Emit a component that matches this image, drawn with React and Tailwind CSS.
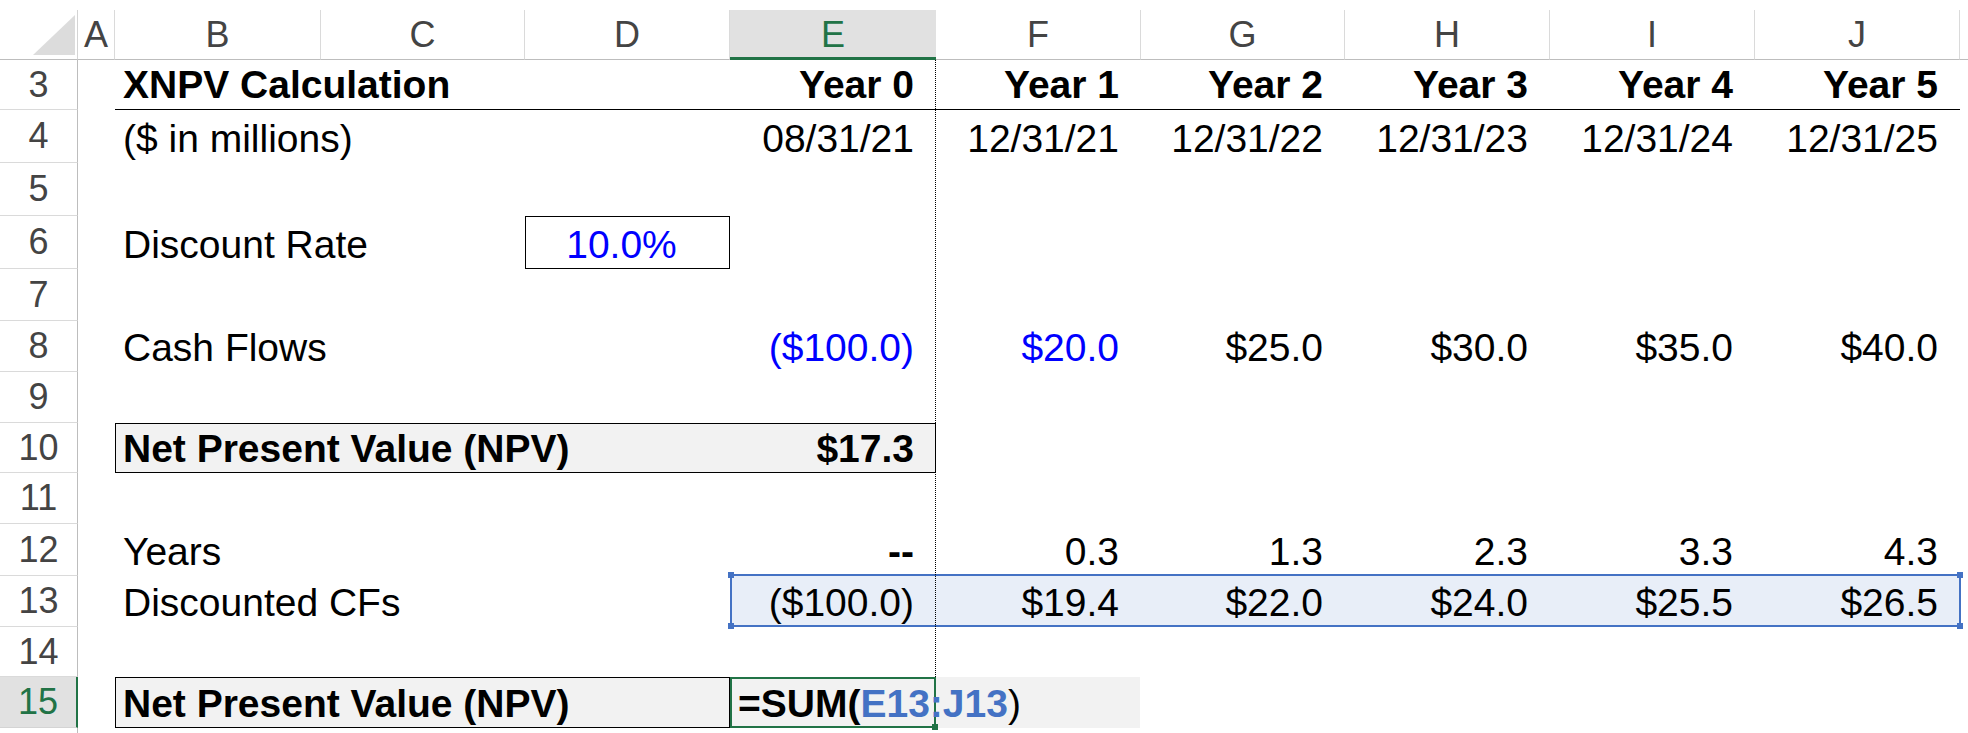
import React from "react";

const FONT = { fontFamily: '"Liberation Sans", Arial, Helvetica, sans-serif' };

const COLS = [
  { l: "A", w: "w-[37px]" },
  { l: "B", w: "w-[206px]" },
  { l: "C", w: "w-[204px]" },
  { l: "D", w: "w-[205px]" },
  { l: "E", w: "w-[206px]" },
  { l: "F", w: "w-[205px]" },
  { l: "G", w: "w-[204px]" },
  { l: "H", w: "w-[205px]" },
  { l: "I", w: "w-[205px]" },
  { l: "J", w: "w-[205px]" },
];

function RowHead({ n, active }) {
  return (
    <div
      className={
        active
          ? "w-[78px] shrink-0 flex items-center justify-center bg-[#e1e1e1] text-[#217346] border-r-2 border-r-[#217346] border-b border-b-[#d4d4d4] text-[36px]"
          : "w-[78px] shrink-0 flex items-center justify-center text-[#444444] border-r border-r-[#bdbdbd] border-b border-b-[#dadada] text-[36px]"
      }
    >
      {n}
    </div>
  );
}

function Cell({ w, right, center, className = "", children }) {
  const align = right ? "justify-end pr-[22px]" : center ? "justify-center" : "justify-start pl-[8px]";
  return (
    <div className={`${w} shrink-0 flex items-end pb-[5px] whitespace-nowrap text-[39px] leading-[39px] ${align} ${className}`}>
      {children}
    </div>
  );
}

function Row({ h, n, active, children }) {
  return (
    <div className={`flex ${h}`}>
      <RowHead n={n} active={active} />
      {children}
    </div>
  );
}

const years = ["Year 1", "Year 2", "Year 3", "Year 4", "Year 5"];
const dates = ["12/31/21", "12/31/22", "12/31/23", "12/31/24", "12/31/25"];
const fw = ["w-[205px]", "w-[204px]", "w-[205px]", "w-[205px]", "w-[205px]"];

export default function App() {
  return (
    <div className="relative w-[1968px] h-[733px] bg-white overflow-hidden text-black" style={FONT}>
      <div className="h-[10px]" />
      {/* Column header */}
      <div className="flex h-[50px]">
        <div className="w-[78px] shrink-0 border-r border-r-[#d4d4d4] border-b border-b-[#bdbdbd]">
          <svg width="78" height="49" className="block">
            <polygon points="75,5 75,45 33,45" fill="#dcdcdc" />
          </svg>
        </div>
        {COLS.map((c) =>
          c.l === "E" ? (
            <div
              key={c.l}
              className={`${c.w} shrink-0 flex items-center justify-center bg-[#e1e1e1] text-[#217346] border-b-[3px] border-b-[#217346] text-[36px] pt-[2px]`}
            >
              {c.l}
            </div>
          ) : (
            <div
              key={c.l}
              className={`${c.w} shrink-0 flex items-center justify-center text-[#444444] border-r border-r-[#dadada] border-b border-b-[#bdbdbd] text-[36px]`}
            >
              {c.l}
            </div>
          )
        )}
        <div className="flex-1 border-b border-b-[#bdbdbd]" />
      </div>

      {/* Row 3 */}
      <Row h="h-[50px]" n={3}>
        <Cell w="w-[37px]" />
        <div className="flex border-b border-black">
          <Cell w="w-[206px]" className="font-bold">XNPV Calculation</Cell>
          <Cell w="w-[204px]" />
          <Cell w="w-[205px]" />
          <Cell w="w-[206px]" right className="font-bold">Year 0</Cell>
          {years.map((y, i) => (
            <Cell key={y} w={fw[i]} right className="font-bold">{y}</Cell>
          ))}
        </div>
      </Row>

      {/* Row 4 */}
      <Row h="h-[53px]" n={4}>
        <Cell w="w-[37px]" />
        <Cell w="w-[206px]">($ in millions)</Cell>
        <Cell w="w-[204px]" />
        <Cell w="w-[205px]" />
        <Cell w="w-[206px]" right>08/31/21</Cell>
        {dates.map((d, i) => (
          <Cell key={d} w={fw[i]} right>{d}</Cell>
        ))}
      </Row>

      <Row h="h-[53px]" n={5} />

      {/* Row 6 */}
      <Row h="h-[53px]" n={6}>
        <Cell w="w-[37px]" />
        <Cell w="w-[206px]">Discount Rate</Cell>
        <Cell w="w-[204px]" />
        <div className="w-[205px] shrink-0 border border-black flex items-end justify-center pb-[4px] pr-[12px] text-[39px] leading-[39px] text-[#0000ff]">
          10.0%
        </div>
      </Row>

      <Row h="h-[52px]" n={7} />

      {/* Row 8 */}
      <Row h="h-[51px]" n={8}>
        <Cell w="w-[37px]" />
        <Cell w="w-[206px]">Cash Flows</Cell>
        <Cell w="w-[204px]" />
        <Cell w="w-[205px]" />
        <Cell w="w-[206px]" right className="text-[#0000ff]">($100.0)</Cell>
        <Cell w="w-[205px]" right className="text-[#0000ff]">$20.0</Cell>
        <Cell w="w-[204px]" right>$25.0</Cell>
        <Cell w="w-[205px]" right>$30.0</Cell>
        <Cell w="w-[205px]" right>$35.0</Cell>
        <Cell w="w-[205px]" right>$40.0</Cell>
      </Row>

      <Row h="h-[51px]" n={9} />

      {/* Row 10 */}
      <Row h="h-[50px]" n={10}>
        <Cell w="w-[37px]" />
        <div className="w-[821px] shrink-0 flex items-end justify-between border border-black bg-[#f2f2f2] pl-[7px] pr-[21px] pb-[4px] text-[39px] leading-[39px] font-bold whitespace-nowrap">
          <span>Net Present Value (NPV)</span>
          <span>$17.3</span>
        </div>
      </Row>

      <Row h="h-[51px]" n={11} />

      {/* Row 12 */}
      <Row h="h-[52px]" n={12}>
        <Cell w="w-[37px]" />
        <Cell w="w-[206px]">Years</Cell>
        <Cell w="w-[204px]" />
        <Cell w="w-[205px]" />
        <Cell w="w-[206px]" right className="font-bold">--</Cell>
        <Cell w="w-[205px]" right>0.3</Cell>
        <Cell w="w-[204px]" right>1.3</Cell>
        <Cell w="w-[205px]" right>2.3</Cell>
        <Cell w="w-[205px]" right>3.3</Cell>
        <Cell w="w-[205px]" right>4.3</Cell>
      </Row>

      {/* Row 13 */}
      <Row h="h-[51px]" n={13}>
        <Cell w="w-[37px]" />
        <Cell w="w-[206px]">Discounted CFs</Cell>
        <Cell w="w-[204px]" />
        <Cell w="w-[205px]" />
        <div className="relative flex bg-[#e8eef8]">
          <Cell w="w-[206px]" right>($100.0)</Cell>
          <Cell w="w-[205px]" right>$19.4</Cell>
          <Cell w="w-[204px]" right>$22.0</Cell>
          <Cell w="w-[205px]" right>$24.0</Cell>
          <Cell w="w-[205px]" right>$25.5</Cell>
          <Cell w="w-[205px]" right>$26.5</Cell>
          <div className="absolute -top-[2px] bottom-0 left-0 -right-[1px] border-2 border-[#4472c4]">
            <div className="absolute -left-[4px] -top-[4px] w-[6px] h-[6px] bg-[#4472c4]" />
            <div className="absolute -left-[4px] -bottom-[4px] w-[6px] h-[6px] bg-[#4472c4]" />
            <div className="absolute -right-[4px] -top-[4px] w-[6px] h-[6px] bg-[#4472c4]" />
            <div className="absolute -right-[4px] -bottom-[4px] w-[6px] h-[6px] bg-[#4472c4]" />
          </div>
        </div>
      </Row>

      <Row h="h-[50px]" n={14} />

      {/* Row 15 */}
      <Row h="h-[51px]" n={15} active>
        <Cell w="w-[37px]" />
        <div className="w-[615px] shrink-0 flex items-end border border-black bg-[#f2f2f2] pl-[7px] pb-[4px] text-[39px] leading-[39px] font-bold whitespace-nowrap">
          Net Present Value (NPV)
        </div>
        <div className="relative z-10 w-[206px] shrink-0 flex items-end border-2 border-[#217346] bg-[#f2f2f2] pl-[6px] pb-[3px] text-[39px] leading-[39px] font-bold whitespace-nowrap">
          <span>
            =SUM(<span className="text-[#4472c4]">E13:J13</span>
            <span className="font-normal">)</span>
          </span>
          <div className="absolute -right-[4px] -bottom-[4px] w-[6px] h-[6px] bg-[#217346]" />
        </div>
        <div className="w-[204px] shrink-0 bg-[#f2f2f2]" />
      </Row>

      <div className="flex h-[5px]">
        <div className="w-[78px] border-r border-r-[#bdbdbd]" />
      </div>

      {/* Page-break dotted line */}
      <div className="absolute left-[935px] top-[60px] h-[617px] border-l border-dotted border-black z-20" />
    </div>
  );
}
